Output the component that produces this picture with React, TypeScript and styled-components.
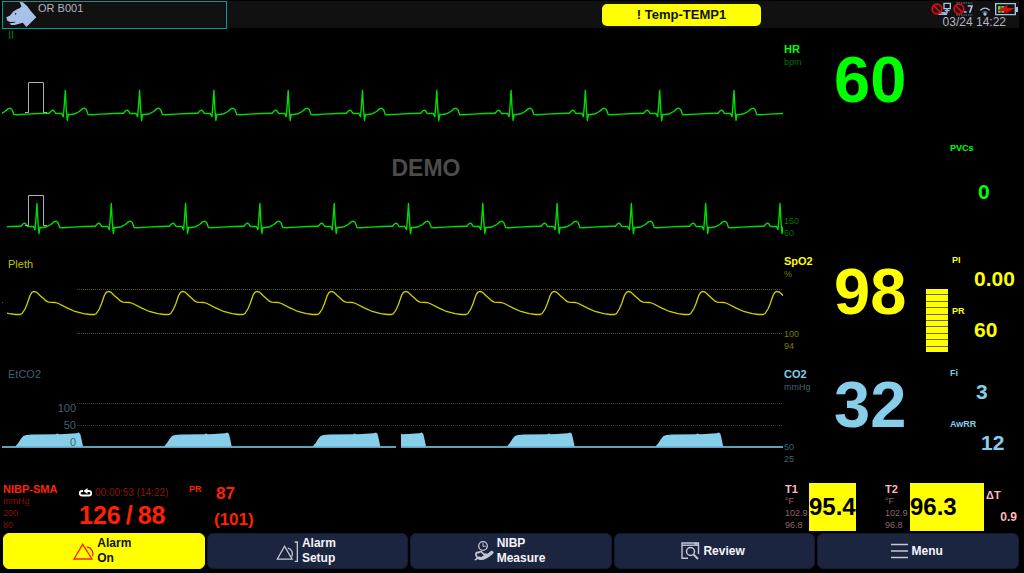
import React from "react";
import styled, { createGlobalStyle } from "styled-components";

const c = {
  ecg: "#00ff00",
  ecgDim: "#007200",
  spo2: "#ffff00",
  spo2Dim: "#7c7c00",
  co2: "#87ceeb",
  co2Dim: "#40606d",
  nibp: "#ff2200",
  nibpDim: "#801400",
  temp: "#ffb6c1",
  tempDim: "#8d646b",
  icon: "#a9c1e8",
};

const GlobalStyle = createGlobalStyle`
  *, *::before, *::after { box-sizing: border-box; }
  body {
    margin: 0;
    background: #000;
    font-family: "Liberation Sans", Arial, sans-serif;
  }
`;

const Screen = styled.div`
  display: flex;
  flex-direction: column;
  min-height: 100vh;
  background: #000;
`;

/* ---------- header ---------- */

const Header = styled.header`
  display: grid;
  grid-template-columns: 225px minmax(0, 1fr) 160px;
  height: 27px;
  margin: 1px 5px 0 2px;
  background: #111;
`;

const PatientBox = styled.div`
  display: flex;
  align-items: flex-start;
  gap: 1px;
  padding-left: 3px;
  border: 1px solid #009a9a;
  color: #b4b4c4;
  font-size: 11px;
  line-height: 13px;
`;

const AlarmSlot = styled.div`
  display: flex;
  align-items: center;
  justify-content: flex-end;
  padding-right: 98px;
`;

const AlarmPill = styled.div`
  width: 159px;
  height: 22px;
  border-radius: 5px;
  background: #ffff00;
  color: #111;
  font-size: 13px;
  font-weight: bold;
  line-height: 22px;
  text-align: center;
`;

const Status = styled.div`
  display: flex;
  flex-direction: column;
  align-items: flex-end;
`;

const StatusIcons = styled.div`
  display: flex;
  gap: 2px;
  height: 15px;
  padding: 1px 1px 0 0;
`;

const WifiSlot = styled.span`
  display: flex;
  padding: 0 3px 0 5px;
`;

const Clock = styled.time`
  padding-right: 13px;
  color: #b4b4c4;
  font-size: 12px;
  line-height: 13px;
`;

/* ---------- waves ---------- */

const Waves = styled.main`
  display: flex;
  flex: 1 0 auto;
  flex-direction: column;
`;

const Row = styled.section<{ $h: number }>`
  display: grid;
  flex: 1 0 auto;
  grid-template-columns: minmax(0, 1fr) 241px;
  min-height: ${(p) => p.$h}px;
`;

const WaveColumn = styled.div`
  position: relative;
  display: flex;
  flex-direction: column;
`;

const WaveLabel = styled.div<{ $color: string; $lh: number }>`
  padding-left: 8px;
  color: ${(p) => p.$color};
  font-size: 11px;
  line-height: ${(p) => p.$lh}px;
`;

const Chart = styled.svg`
  display: block;
  width: 100%;
  grid-area: 1 / 1;
`;

const ChartStack = styled.div`
  display: grid;
`;

const Axis = styled.div`
  display: flex;
  flex-direction: column;
  grid-area: 1 / 1;
  z-index: 1;
  width: 76px;
  padding-top: 19px;
  color: ${c.co2Dim};
  font-size: 11px;
  line-height: 17px;
  text-align: right;
`;

const Demo = styled.div`
  position: absolute;
  top: 126px;
  left: 50%;
  color: #4c4c4c;
  font-size: 23px;
  font-weight: bold;
  line-height: 28px;
`;

/* ---------- parameters ---------- */

const Tile = styled.div<{ $color: string; $top?: number }>`
  display: grid;
  grid-template-columns: 50px 92px minmax(0, 1fr);
  padding: ${(p) => p.$top ?? 0}px 0 0 1px;
  color: ${(p) => p.$color};
`;

const Names = styled.div`
  display: flex;
  flex-direction: column;
  padding-bottom: 15px;
`;

const Name = styled.div`
  font-size: 11px;
  font-weight: bold;
  line-height: 14px;
`;

const Unit = styled.div<{ $color: string }>`
  color: ${(p) => p.$color};
  font-size: 9px;
  line-height: 12px;
`;

const Limits = styled.div<{ $color: string }>`
  margin-top: auto;
  color: ${(p) => p.$color};
  font-size: 9px;
  line-height: 12px;
`;

const Big = styled.div`
  font-size: 65px;
  font-weight: bold;
  line-height: 76px;
`;

const Side = styled.div<{ $top?: number; $inset?: number }>`
  display: flex;
  gap: 4px;
  padding: ${(p) => p.$top ?? 0}px 0 0 ${(p) => p.$inset ?? 0}px;
`;

const Gauge = styled.div`
  display: flex;
  flex-direction: column;
  gap: 1px;
  width: 22px;
  height: 63px;
  margin-top: 35px;
  background: #6b6b00;
`;

const GaugeCell = styled.span`
  flex: 1;
  background: #ffff00;
`;

const Metric = styled.div<{ $gap?: number }>`
  display: flex;
  flex-direction: column;
  gap: ${(p) => p.$gap ?? 1}px;
  min-height: 51px;
`;

const MetricName = styled.div`
  font-size: 9px;
  font-weight: bold;
  line-height: 12px;
`;

const MetricValue = styled.div<{ $indent: number }>`
  padding-left: ${(p) => p.$indent}px;
  font-size: 21px;
  font-weight: bold;
  line-height: 24px;
`;

/* ---------- bottom strip ---------- */

const Strip = styled.section`
  display: grid;
  grid-template-columns: minmax(0, 1fr) 239px;
  min-height: 51px;
  padding-top: 3px;
`;

const Nibp = styled.div`
  display: grid;
  grid-template-columns: 76px 110px 25px 60px;
  padding-left: 3px;
  color: ${c.nibp};
`;

const Details = styled.div<{ $color: string; $dim: string }>`
  color: ${(p) => p.$dim};
  font-size: 9px;
  line-height: 12px;
  & > strong {
    display: block;
    color: ${(p) => p.$color};
    font-size: 11px;
  }
`;

const Timer = styled.div`
  display: flex;
  align-items: center;
  gap: 3px;
  height: 18px;
  color: #8e1600;
  font-size: 10px;
`;

const Pressure = styled.div`
  display: flex;
  gap: 5px;
  font-size: 25px;
  font-weight: bold;
  line-height: 28px;
`;

const Pulse = styled.div`
  display: flex;
  flex-direction: column;
  gap: 4px;
  font-size: 17px;
  font-weight: bold;
  line-height: 22px;
  & > span:first-child {
    padding-left: 2px;
  }
`;

const Temps = styled.div`
  display: grid;
  grid-template-columns: 24px 47px 29px 25px 74px minmax(0, 1fr);
`;

const TempAlarm = styled.div`
  background: #ffff00;
  color: #000;
  font-size: 24px;
  font-weight: bold;
  line-height: 48px;
`;

const Delta = styled.div`
  display: flex;
  flex-direction: column;
  gap: 9px;
  padding: 6px 7px 0 2px;
  color: ${c.temp};
  font-size: 11px;
  font-weight: bold;
  line-height: 13px;
  & > span:last-child {
    font-size: 12px;
    text-align: right;
  }
`;

/* ---------- buttons ---------- */

const Keys = styled.nav`
  display: grid;
  grid-template-columns: repeat(5, minmax(0, 1fr));
  gap: 2px;
  padding: 2px 5px 4px 3px;
`;

const Key = styled.button<{ $active?: boolean }>`
  display: flex;
  align-items: center;
  justify-content: center;
  gap: 3px;
  height: 36px;
  padding: 0 3px 0 0;
  border: 1px solid ${(p) => (p.$active ? "#ffff00" : "#141b30")};
  border-radius: 6px;
  background: ${(p) => (p.$active ? "#ffff00" : "#1c2540")};
  color: ${(p) => (p.$active ? "#111" : "#f4f4f8")};
  font-family: inherit;
  font-size: 12px;
  font-weight: bold;
  line-height: 15px;
  text-align: left;
  white-space: pre-line;
`;

/* ---------- wave data ---------- */

type Point = [number, number];

const PERIOD = 74.3;

const ECG_BEAT: Point[] = [
  [-16, -0.2], [-14, -2.6], [-12.4, -3.4], [-11, -2.4], [-9.6, 0], [-3.6, 0],
  [-2, 3.2], [-1.2, -6], [0, -23], [1, -4], [2, 7], [3, 0.8], [4, 1.2],
  [10, 0.2], [14, -2], [17, -4.6], [19, -5.4], [21, -4], [22.8, 1],
  [26, 1.3], [36, 0.6], [48, 0], [57, -0.2],
];

const PLETH_BEAT: Point[] = [
  [-14, 23], [-12, 22], [-9, 17.5], [-6.7, 12], [-4, 4], [-2, 0.8], [0, 0],
  [2.5, 0.6], [6, 4], [10, 7.5], [12, 9.4], [14.5, 10.7], [21, 11],
  [24.5, 12], [33, 16.3], [41, 20], [49.5, 22.2], [56, 23],
];

const BREATH: Point[] = [
  [0, 0], [3, -3.5], [5.5, -7.5], [8, -10.4], [11, -11.6], [17, -12],
  [40.5, -12.2], [42, -13], [44, -12.2], [50, -12.4], [53, -12.8],
  [61, -13.2], [63.5, -14], [65, -12.6], [66.5, -6], [67.7, 0],
];

const path = (points: Point[]) =>
  "M" + points.map(([x, y]) => `${x.toFixed(1)} ${y.toFixed(1)}`).join("L");

const train = (beat: Point[], first: number, base: number) => {
  const points: Point[] = [];
  for (let i = 0; i < 13; i++) {
    beat.forEach(([x, y]) => points.push([first + i * PERIOD + x, base + y]));
  }
  return path(points);
};

const breath = (start: number, base: number) =>
  path(BREATH.map(([x, y]): Point => [start + x, base + y])) + "Z";

function Ecg({ id, height, base, first, from }: {
  id: string; height: number; base: number; first: number; from: number;
}) {
  return (
    <Chart height={height} viewBox={`0 0 783 ${height}`} preserveAspectRatio="none" fill="none">
      <clipPath id={id}><rect x={from} width={783 - from} height={height} /></clipPath>
      <path
        d={train(ECG_BEAT, first - PERIOD, base)}
        stroke="#00dc00"
        strokeWidth="1.4"
        strokeLinejoin="round"
        clipPath={`url(#${id})`}
      />
      <path
        d={`M25 ${base - 1}H28.5V${base - 31}H43.5V${base - 1}H47`}
        stroke="#b0b0b0"
      />
    </Chart>
  );
}

function Pleth() {
  return (
    <Chart height="93" viewBox="0 0 783 93" preserveAspectRatio="none" fill="none">
      <clipPath id="pleth"><rect x="7" width="776" height="93" /></clipPath>
      <path d="M77 15.5H783M77 59.5H783" stroke="#585800" strokeDasharray="1 1" />
      <path d="M2 28.5H3" stroke="#6b6b00" />
      <path d={train(PLETH_BEAT, 34 - PERIOD, 17.5)} stroke="#d0d000" strokeWidth="1.3" clipPath="url(#pleth)" />
    </Chart>
  );
}

function Capno() {
  return (
    <Chart height="99" viewBox="0 0 783 99" preserveAspectRatio="none">
      <clipPath id="capno"><path d="M2 0H396V99H2ZM401 0H783V99H401Z" /></clipPath>
      <path d="M77 22.5H783M77 44.5H783" stroke="#2b4049" strokeDasharray="1 1" />
      <g clipPath="url(#capno)">
        <path d="M2 66H783" stroke="#62a0b8" strokeWidth="2" />
        <path d={[15.3, 164, 312.6].map((x) => breath(x, 65.5)).join("")} fill={c.co2} />
        <svg x="401" width="382" height="99" viewBox="401 0 382 99">
          <path d={[358.3, 506.9, 655.5].map((x) => breath(x, 65.5)).join("")} fill={c.co2} />
        </svg>
      </g>
    </Chart>
  );
}

/* ---------- icons ---------- */

const DogIcon = () => (
  <svg width="31" height="25" viewBox="19 4 92 76" fill={c.icon}>
    <path d="M19 50L30 45 40 33 50 27 60 22 65 17 59 4 69 5 82 16 92 30 110 50 80 80 69 67 58 70 44 74 34 74 28 69 46 66 46 64 30 65 21 60Z" />
    <circle cx="47" cy="40" r="2.500" fill="#222" />
  </svg>
);

const NoEntry = ({ x }: { x: number }) => (
  <g fill="none" stroke="#d01414" strokeWidth="5">
    <circle cx={x} cy="26" r="14.5" fill="#300" />
    <path d={`M${x - 10} 16L${x + 10} 36`} />
  </g>
);

const NetworkIcon = () => (
  <svg width="20" height="14" viewBox="1022 5 60 42" fill="none" stroke={c.icon} strokeWidth="4">
    <path d="M1061 9H1080V25H1061ZM1070 25V38H1058M1063 31H1078" />
    <path d="M1044 42H1070M1048 37H1064" strokeWidth="4" />
    <NoEntry x={1040} />
  </svg>
);

const StationIcon = () => (
  <svg width="20" height="14" viewBox="1088 5 60 42" fill="none" stroke={c.icon}>
    <path d="M1098 8H1148M1098 44H1148" strokeWidth="3" strokeDasharray="4 3" stroke="#7488a8" />
    <path d="M1132 17H1145L1138 37M1121 35H1129" strokeWidth="5" />
    <NoEntry x={1106} />
  </svg>
);

const WifiIcon = () => (
  <svg width="10" height="14" viewBox="1171 5 30 42" fill="none" stroke={c.icon} strokeWidth="4">
    <path d="M1172 30Q1186 17 1200 30" />
    <path d="M1178 37Q1186 29 1194 37" stroke="#60708c" strokeWidth="3" />
    <circle cx="1186" cy="41" r="5" fill={c.icon} stroke="none" />
  </svg>
);

const BatteryIcon = () => (
  <svg width="23" height="14" viewBox="1215 5 69 42">
    <path d="M1217 10H1276V43H1217Z" fill="#111" stroke={c.icon} strokeWidth="4" />
    <path d="M1278 20H1284V35H1278Z" fill={c.icon} />
    <path d="M1224 17H1232V37H1224ZM1234 17H1243V37H1234Z" fill="#4fd04f" />
    <path d="M1220 32L1252 14 1252 23 1274 23 1246 40 1246 32Z" fill="#e00808" />
  </svg>
);

const RepeatIcon = () => (
  <svg width="13" height="9" viewBox="0 0 13 9" fill="none" stroke="#fff" strokeWidth="1.800">
    <path d="M4 3H3A2 2 0 0 0 3 7.500H10A2 2 0 0 0 10 3H7" />
    <path d="M8.500 0V6L4.500 3Z" fill="#fff" stroke="none" />
  </svg>
);

const AlarmOnIcon = () => (
  <svg width="21" height="17" viewBox="222 217 63 51" fill="none" stroke="#ff2200" strokeWidth="4">
    <path d="M251 221L279 265H225Z" />
    <path d="M264 229C277 230 285 243 280 257" />
  </svg>
);

const AlarmSetupIcon = () => (
  <svg width="23" height="21" viewBox="830 207 68 64" fill="none" stroke="#c4c8d4" strokeWidth="4">
    <path d="M855 223L878 262H833Z" />
    <path d="M865 229C877 231 882 243 877 255" />
    <path d="M886 210H894V269H886" />
  </svg>
);

const NibpIcon = () => (
  <svg width="20" height="20" viewBox="0 0 20 20" fill="none" stroke="#c4c8d4" strokeLinecap="round">
    <circle cx="9" cy="5" r="4.300" strokeWidth="1.300" />
    <path d="M9 2.500V5.300H11.300" strokeWidth="1" />
    <path d="M1.500 18.500C3.500 18 3.500 16.500 2.500 15C1.200 13 2 11 4.500 11.500" strokeWidth="1.800" />
    <path d="M5 17C9 18.500 12 16.500 18 11.500" strokeWidth="3" />
    <path d="M4.500 11.500L7 10.500L11 14.500L7 17.500" strokeWidth="1.600" />
    <path d="M11 13L14 13.500L17.500 10.500" strokeWidth="1.600" />
  </svg>
);

const ReviewIcon = () => (
  <svg width="19" height="18" viewBox="0 0 19 18" fill="none" stroke="#c4c8d4" strokeWidth="1.400">
    <path d="M7 16.300H1V1H17.500V12" />
    <path d="M1 3.200H17.500" />
    <path d="M13.500 1.800H16.500" strokeWidth="2" />
    <circle cx="9.500" cy="9.500" r="4" strokeWidth="1.500" />
    <path d="M12.500 12.500L17 17" strokeWidth="1.800" />
  </svg>
);

const MenuIcon = () => (
  <svg width="18" height="16" viewBox="0 0 18 16" stroke="#c4c8d4" strokeWidth="1.500">
    <path d="M0 1.500H17M0 8H17M0 14.500H17" />
  </svg>
);

const keys = [
  { label: "Alarm\nOn", icon: <AlarmOnIcon />, active: true },
  { label: "Alarm\nSetup", icon: <AlarmSetupIcon /> },
  { label: "NIBP\nMeasure", icon: <NibpIcon /> },
  { label: "Review", icon: <ReviewIcon /> },
  { label: "Menu", icon: <MenuIcon /> },
];

export default function App() {
  return (
    <Screen>
      <GlobalStyle />
      <Header>
        <PatientBox><DogIcon />OR B001</PatientBox>
        <AlarmSlot><AlarmPill role="alert">! Temp-TEMP1</AlarmPill></AlarmSlot>
        <Status>
          <StatusIcons>
            <NetworkIcon />
            <StationIcon />
            <WifiSlot><WifiIcon /></WifiSlot>
            <BatteryIcon />
          </StatusIcons>
          <Clock>03/24 14:22</Clock>
        </Status>
      </Header>

      <Waves>
        <Row $h={226}>
          <WaveColumn>
            <WaveLabel $color="#008000" $lh={14}>II</WaveLabel>
            <Ecg id="ecg-a" height={99} base={71.5} first={65.3} from={2} />
            <Ecg id="ecg-b" height={113} base={85.5} first={37} from={7} />
            <Demo>DEMO</Demo>
          </WaveColumn>
          <Tile $color={c.ecg} $top={14}>
            <Names>
              <Name>HR</Name>
              <Unit $color={c.ecgDim}>bpm</Unit>
              <Limits $color={c.ecgDim}>150<br />60</Limits>
            </Names>
            <Big>60</Big>
            <Side $top={100} $inset={24}>
              <Metric $gap={26}>
                <MetricName>PVCs</MetricName>
                <MetricValue $indent={28}>0</MetricValue>
              </Metric>
            </Side>
          </Tile>
        </Row>

        <Row $h={113}>
          <WaveColumn>
            <WaveLabel $color="#c0c000" $lh={20}>Pleth</WaveLabel>
            <Pleth />
          </WaveColumn>
          <Tile $color={c.spo2}>
            <Names>
              <Name>SpO2</Name>
              <Unit $color={c.spo2Dim}>%</Unit>
              <Limits $color={c.spo2Dim}>100<br />94</Limits>
            </Names>
            <Big>98</Big>
            <Side>
              <Gauge>
                {Array.from({ length: 10 }, (_, i) => <GaugeCell key={i} />)}
              </Gauge>
              <div>
                <Metric>
                  <MetricName>PI</MetricName>
                  <MetricValue $indent={22}>0.00</MetricValue>
                </Metric>
                <Metric>
                  <MetricName>PR</MetricName>
                  <MetricValue $indent={22}>60</MetricValue>
                </Metric>
              </div>
            </Side>
          </Tile>
        </Row>

        <Row $h={113}>
          <WaveColumn>
            <WaveLabel $color={c.co2Dim} $lh={14}>EtCO2</WaveLabel>
            <ChartStack>
              <Capno />
              <Axis><span>100</span><span>50</span><span>0</span></Axis>
            </ChartStack>
          </WaveColumn>
          <Tile $color={c.co2}>
            <Names>
              <Name>CO2</Name>
              <Unit $color={c.co2Dim}>mmHg</Unit>
              <Limits $color={c.co2Dim}>50<br />25</Limits>
            </Names>
            <Big>32</Big>
            <Side $inset={24}>
              <div>
                <Metric>
                  <MetricName>Fi</MetricName>
                  <MetricValue $indent={26}>3</MetricValue>
                </Metric>
                <Metric>
                  <MetricName>AwRR</MetricName>
                  <MetricValue $indent={31}>12</MetricValue>
                </Metric>
              </div>
            </Side>
          </Tile>
        </Row>
      </Waves>

      <Strip>
        <Nibp>
          <Details $color={c.nibp} $dim={c.nibpDim}>
            <strong>NIBP-SMA</strong>
            mmHg<br />200<br />80
          </Details>
          <div>
            <Timer><RepeatIcon />00:00:53 (14:22)</Timer>
            <Pressure><span>126</span><span>/</span><span>88</span></Pressure>
          </div>
          <MetricName>PR</MetricName>
          <Pulse><span>87</span><span>(101)</span></Pulse>
        </Nibp>
        <Temps>
          <Details $color={c.temp} $dim={c.tempDim}>
            <strong>T1</strong>
            °F<br />102.9<br />96.8
          </Details>
          <TempAlarm>95.4</TempAlarm>
          <span />
          <Details $color={c.temp} $dim={c.tempDim}>
            <strong>T2</strong>
            °F<br />102.9<br />96.8
          </Details>
          <TempAlarm>96.3</TempAlarm>
          <Delta><span>ΔT</span><span>0.9</span></Delta>
        </Temps>
      </Strip>

      <Keys>
        {keys.map((k) => (
          <Key key={k.label} type="button" $active={k.active}>
            {k.icon}
            <span>{k.label}</span>
          </Key>
        ))}
      </Keys>
    </Screen>
  );
}
